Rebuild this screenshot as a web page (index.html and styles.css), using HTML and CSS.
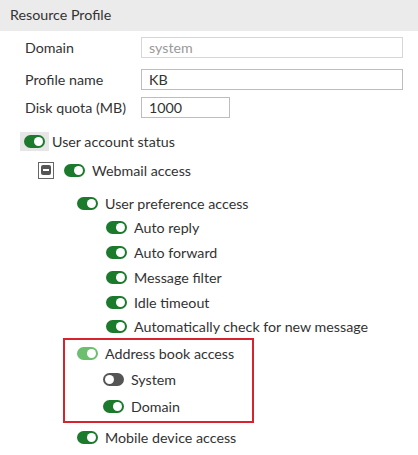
FILE: index.html
```html
<!DOCTYPE html>
<html>
<head>
<meta charset="utf-8">
<link rel="stylesheet" href="styles.css">
</head>
<body>
<div class="header">Resource Profile</div>
<div class="form">
  <div class="frow r1"><span class="flabel">Domain</span><div class="input wide disabled">system</div></div>
  <div class="frow r2"><span class="flabel">Profile name</span><div class="input wide">KB</div></div>
  <div class="frow r3"><span class="flabel">Disk quota (MB)</span><div class="input short">1000</div></div>
</div>
<div class="tree">
  <div class="row l0"><span class="hl"><span class="tg on"></span></span><span class="txt">User account status</span></div>
  <div class="row l1 m5"><span class="cb"><span class="cbi"></span></span><span class="tg on"></span><span class="txt">Webmail access</span></div>
  <div class="row l2 m9"><span class="tg on"></span><span class="txt">User preference access</span></div>
  <div class="row l3"><span class="tg on"></span><span class="txt">Auto reply</span></div>
  <div class="row l3 m1"><span class="tg on"></span><span class="txt">Auto forward</span></div>
  <div class="row l3 m1"><span class="tg on"></span><span class="txt">Message filter</span></div>
  <div class="row l3 m1"><span class="tg on"></span><span class="txt">Idle timeout</span></div>
  <div class="row l3"><span class="tg on"></span><span class="txt">Automatically check for new message</span></div>
  <div class="box">
    <div class="row"><span class="tg light"></span><span class="txt">Address book access</span></div>
    <div class="row b1 m2"><span class="tg off"></span><span class="txt">System</span></div>
    <div class="row b1 m3"><span class="tg on"></span><span class="txt">Domain</span></div>
  </div>
  <div class="row l2 m2"><span class="tg on"></span><span class="txt">Mobile device access</span></div>
</div>
</body>
</html>
```
FILE: styles.css
```css
html, body { margin: 0; padding: 0; background: #fff; }
body { font-family: Lato, "Open Sans", sans-serif; font-size: 14.25px; color: #333; width: 418px; height: 455px; overflow: hidden; }
.header { height: 31px; background: #ebebeb; line-height: 30px; padding-left: 10px; color: #333; }
.form { padding-left: 25px; }
.frow { display: flex; align-items: center; height: 21px; }
.r1 { margin-top: 6px; }
.r2 { margin-top: 11px; }
.r3 { margin-top: 7px; }
.flabel { width: 116px; }
.input { box-sizing: border-box; height: 21px; border: 1px solid #bdbdbd; padding-left: 7px; line-height: 19px; color: #333; }
.input.wide { width: 262px; }
.input.short { width: 89px; }
.input.disabled { color: #9a9a9a; border-color: #d6d6d6; }
.tree { margin-top: 11px; }
.row { display: flex; align-items: center; height: 24px; }
.l0 { padding-left: 20px; }
.l1 { padding-left: 38px; }
.l2 { padding-left: 77px; }
.l3 { padding-left: 106px; }
.b1 { padding-left: 26px; }
.m1 { margin-top: 1px; }
.m2 { margin-top: 2px; }
.m3 { margin-top: 3px; }
.m5 { margin-top: 5px; }
.m9 { margin-top: 9px; }
.hl { display: flex; align-items: center; justify-content: center; width: 29px; height: 19px; background: #e6e6e6; }
.tg { position: relative; display: inline-block; box-sizing: border-box; width: 21px; height: 13px; border-radius: 6.5px; background: #1b7a2c; flex: none; }
.tg::after { content: ""; position: absolute; top: 2px; right: 2px; width: 9px; height: 9px; border-radius: 50%; background: #fff; }
.tg.light { background: #6bbf6f; }
.tg.off { background: #555; }
.tg.off::after { right: auto; left: 2px; }
.hl + .txt { margin-left: 3px; }
.txt { margin-left: 7px; white-space: nowrap; }
.cb { box-sizing: border-box; width: 16px; height: 17px; border: 1px solid #666; display: flex; align-items: center; justify-content: center; margin-right: 10px; }
.cbi { position: relative; width: 10px; height: 10px; border-radius: 2px; background: #555; }
.cbi::after { content: ""; position: absolute; left: 2px; top: 4px; width: 6px; height: 2px; background: #fff; }
.box { box-sizing: border-box; margin-left: 63px; width: 191px; border: 2px solid #d8232f; padding: 1px 0 3px 12px; }
```
